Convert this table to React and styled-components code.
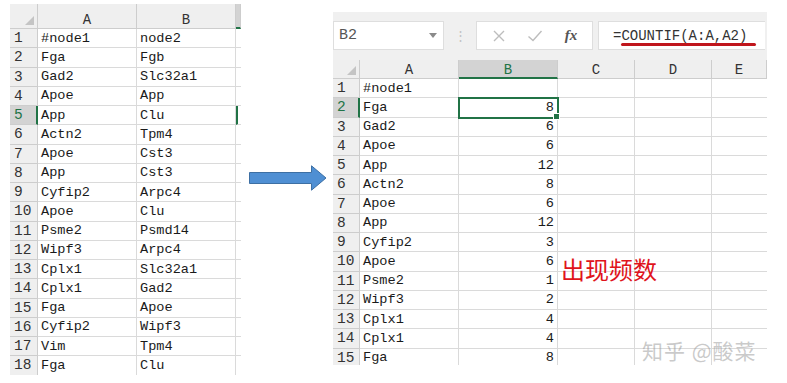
import React from "react";
import styled, { createGlobalStyle, css } from "styled-components";

const GlobalStyle = createGlobalStyle`
  html, body {
    margin: 0;
    padding: 0;
    background: #ffffff;
  }
  body {
    font-family: "Liberation Mono", "DejaVu Sans Mono", monospace;
    color: #222;
  }
`;

const GREEN = "#217346";
const GRID = "#dadada";
const HEAD_BG = "#efefef";
const HEAD_LINE = "#cdcdcd";
const HEAD_SEL = "#d3d3d3";

const Page = styled.div`
  display: flex;
  align-items: flex-start;
  width: 787px;
  height: 383px;
  padding-left: 10px;
  box-sizing: border-box;
  overflow: hidden;
`;

const Sheet = styled.div`
  position: relative;
  background: #f0f0f0;
  overflow: hidden;
  flex: none;
  ${(p) =>
    p.$side === "left"
      ? css`
          margin-top: 4px;
          width: 231px;
          height: 371px;
        `
      : css`
          margin-top: 12px;
          width: 434px;
          height: 353px;
        `}
`;

const Grid = styled.div`
  display: grid;
  grid-template-columns: ${(p) => p.$cols};
  grid-template-rows: ${(p) => p.$head} repeat(${(p) => p.$rows}, 19.25px);
  background: #fff;
`;

const Corner = styled.div`
  background: ${HEAD_BG};
  border-right: 1px solid ${HEAD_LINE};
  border-bottom: 1px solid ${HEAD_LINE};
  position: relative;
  &::after {
    content: "";
    position: absolute;
    right: 3px;
    bottom: 3px;
    width: 0;
    height: 0;
    border-left: 9px solid transparent;
    border-bottom: 9px solid #c4c4c4;
  }
`;

const ColHead = styled.div`
  background: ${(p) => (p.$sel ? HEAD_SEL : HEAD_BG)};
  border-right: 1px solid ${HEAD_LINE};
  border-bottom: ${(p) => (p.$sel ? `2px solid ${GREEN}` : `1px solid ${HEAD_LINE}`)};
  display: flex;
  align-items: flex-end;
  justify-content: center;
  font-size: 14px;
  line-height: 12px;
  padding-bottom: ${(p) => (p.$sel ? "1px" : "2px")};
  color: ${(p) => (p.$sel ? GREEN : "#333")};
  box-sizing: border-box;
  overflow: hidden;
`;

const RowHead = styled.div`
  background: ${(p) => (p.$sel ? HEAD_SEL : HEAD_BG)};
  border-right: ${(p) => (p.$sel ? `2px solid ${GREEN}` : `1px solid ${HEAD_LINE}`)};
  border-bottom: 1px solid ${HEAD_LINE};
  display: flex;
  align-items: center;
  padding-left: 4px;
  font-size: 14.5px;
  color: ${(p) => (p.$sel ? GREEN : "#333")};
  box-sizing: border-box;
  overflow: hidden;
`;

const Cell = styled.div`
  position: relative;
  border-right: ${(p) => (p.$last ? "none" : `1px solid ${GRID}`)};
  border-bottom: 1px solid ${GRID};
  display: flex;
  align-items: center;
  justify-content: ${(p) => (p.$num ? "flex-end" : "flex-start")};
  padding: 0 3px;
  font-size: 13.6px;
  color: #1a1a1a;
  white-space: nowrap;
  box-sizing: border-box;
  overflow: ${(p) => (p.$active ? "visible" : "hidden")};
  ${(p) =>
    p.$active &&
    css`
      outline: 2px solid ${GREEN};
      outline-offset: -1px;
      z-index: 1;
      &::after {
        content: "";
        position: absolute;
        right: -3px;
        bottom: -3px;
        width: 5px;
        height: 5px;
        background: ${GREEN};
        border: 1px solid #fff;
      }
    `}
  ${(p) =>
    p.$edge &&
    css`
      border-left: 2px solid ${GREEN};
    `}
`;

const FormulaBar = styled.div`
  display: flex;
  align-items: center;
  height: 48px;
  padding-bottom: 10px;
  box-sizing: border-box;
  padding-top: 9px;
`;

const NameBox = styled.div`
  width: 111px;
  height: 29px;
  background: #fff;
  border: 1px solid #dedede;
  box-sizing: border-box;
  display: flex;
  align-items: center;
  justify-content: space-between;
  padding: 0 6px 0 5px;
  font-size: 15px;
  color: #555;
`;

const Caret = styled.span`
  width: 0;
  height: 0;
  border-left: 4px solid transparent;
  border-right: 4px solid transparent;
  border-top: 5px solid #8a8a8a;
`;

const Dots = styled.div`
  width: 32px;
  display: flex;
  justify-content: center;
  color: #c2c2c2;
  font-size: 13px;
`;

const IconBox = styled.div`
  width: 117px;
  height: 29px;
  background: #fff;
  border: 1px solid #dedede;
  box-sizing: border-box;
  display: flex;
  align-items: center;
  justify-content: space-around;
  padding: 0 4px;
`;

const Fx = styled.span`
  font-family: "Liberation Serif", serif;
  font-style: italic;
  font-weight: bold;
  font-size: 15px;
  color: #555;
`;

const FormulaInput = styled.div`
  margin-left: 5px;
  width: 167px;
  height: 29px;
  background: #fff;
  border: 1px solid #dedede;
  border-right: none;
  box-sizing: border-box;
  display: flex;
  align-items: center;
  padding-left: 14px;
  font-size: 14px;
  color: #333;
  position: relative;
`;

const Underline = styled.span`
  position: absolute;
  left: 22px;
  top: 21px;
  width: 135px;
  height: 3px;
  border-radius: 2px;
  background: #c0161c;
`;

const ArrowWrap = styled.div`
  flex: none;
  margin: 165px 6px 0 8px;
  width: 78px;
  height: 26px;
`;

const Note = styled.div`
  position: absolute;
  left: 228px;
  top: 242px;
  font-family: "Noto Sans CJK SC", "Noto Sans", sans-serif;
  font-size: 24px;
  line-height: 30px;
  color: #e0141c;
  z-index: 2;
`;

const Watermark = styled.div`
  position: absolute;
  left: 309px;
  top: 324px;
  font-family: "Noto Sans CJK SC", "Noto Sans", sans-serif;
  font-size: 21px;
  line-height: 28px;
  letter-spacing: 1px;
  color: rgba(150, 150, 150, 0.5);
  z-index: 2;
  white-space: nowrap;
`;

const XIcon = () => (
  <svg width="14" height="14" viewBox="0 0 14 14">
    <path d="M2 2 L12 12 M12 2 L2 12" stroke="#bdbdbd" strokeWidth="1.4" fill="none" />
  </svg>
);

const CheckIcon = () => (
  <svg width="16" height="14" viewBox="0 0 16 14">
    <path d="M1.5 7.5 L6 11.5 L14.5 2" stroke="#bdbdbd" strokeWidth="1.4" fill="none" />
  </svg>
);

const leftRows = [
  ["#node1", "node2"],
  ["Fga", "Fgb"],
  ["Gad2", "Slc32a1"],
  ["Apoe", "App"],
  ["App", "Clu"],
  ["Actn2", "Tpm4"],
  ["Apoe", "Cst3"],
  ["App", "Cst3"],
  ["Cyfip2", "Arpc4"],
  ["Apoe", "Clu"],
  ["Psme2", "Psmd14"],
  ["Wipf3", "Arpc4"],
  ["Cplx1", "Slc32a1"],
  ["Cplx1", "Gad2"],
  ["Fga", "Apoe"],
  ["Cyfip2", "Wipf3"],
  ["Vim", "Tpm4"],
  ["Fga", "Clu"],
];

const counts = ["", 8, 6, 6, 12, 8, 6, 12, 3, 6, 1, 2, 4, 4, 8];

function LeftSheet() {
  return (
    <Sheet $side="left">
      <Grid $cols="28px 99px 99px 5px" $head="25px" $rows={18}>
        <Corner />
        <ColHead>A</ColHead>
        <ColHead>B</ColHead>
        <ColHead $sel />
        {leftRows.map(([a, b], i) => (
          <React.Fragment key={i}>
            <RowHead $sel={i === 4}>{i + 1}</RowHead>
            <Cell>{a}</Cell>
            <Cell>{b}</Cell>
            <Cell $last $edge={i === 4} />
          </React.Fragment>
        ))}
      </Grid>
    </Sheet>
  );
}

function RightSheet() {
  return (
    <Sheet $side="right">
      <FormulaBar>
        <NameBox>
          <span>B2</span>
          <Caret />
        </NameBox>
        <Dots>⋮</Dots>
        <IconBox>
          <XIcon />
          <CheckIcon />
          <Fx>fx</Fx>
        </IconBox>
        <FormulaInput>
          =COUNTIF(A:A,A2)
          <Underline />
        </FormulaInput>
      </FormulaBar>
      <Grid $cols="27px 99px 99px 77px 77px 55px" $head="19px" $rows={15}>
        <Corner />
        <ColHead>A</ColHead>
        <ColHead $sel>B</ColHead>
        <ColHead>C</ColHead>
        <ColHead>D</ColHead>
        <ColHead>E</ColHead>
        {leftRows.slice(0, 15).map(([a], i) => (
          <React.Fragment key={i}>
            <RowHead $sel={i === 1}>{i + 1}</RowHead>
            <Cell>{a}</Cell>
            <Cell $num $active={i === 1}>
              {counts[i]}
            </Cell>
            <Cell />
            <Cell />
            <Cell $last />
          </React.Fragment>
        ))}
      </Grid>
      <Note>出现频数</Note>
      <Watermark>知乎 @酸菜</Watermark>
    </Sheet>
  );
}

export default function App() {
  return (
    <>
      <GlobalStyle />
      <Page>
        <LeftSheet />
        <ArrowWrap>
          <svg width="78" height="26" viewBox="0 0 78 26">
            <path
              d="M0.5 7.5 H62.5 V0.8 L77 13 L62.5 25.2 V18.5 H0.5 Z"
              fill="#4f8fd3"
              stroke="#3d6fa3"
              strokeWidth="1"
            />
          </svg>
        </ArrowWrap>
        <RightSheet />
      </Page>
    </>
  );
}
